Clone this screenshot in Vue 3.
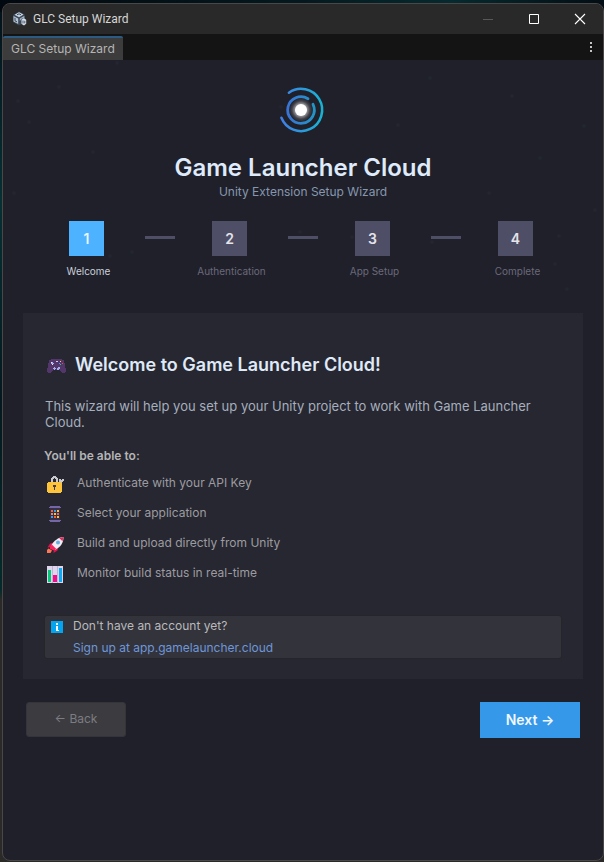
<script setup>
import { ref } from 'vue'

const current = ref(1)
const steps = ['Welcome', 'Authentication', 'App Setup', 'Complete']
const features = [
  { icon: 'lock', text: 'Authenticate with your API Key' },
  { icon: 'phone', text: 'Select your application' },
  { icon: 'rocket', text: 'Build and upload directly from Unity' },
  { icon: 'chart', text: 'Monitor build status in real-time' },
]
const stars = [
  [56, 27], [15, 41], [26, 62], [395, 65], [427, 18], [402, 112], [486, 133], [556, 176], [537, 98],
  [107, 196], [129, 192], [297, 172], [349, 177], [429, 182], [552, 204], [564, 229], [581, 66],
  [114, 3], [278, 47], [90, 92], [509, 36], [592, 150], [11, 133],
]
</script>

<template>
  <div class="desktop">
    <div class="window">
      <header class="titlebar">
        <svg class="app-icon" width="15" height="16" viewBox="0 0 15 16" aria-hidden="true">
          <path d="M7 0.5 12.5 3.5V11L7 14.5 1 11V4z" fill="#3b4757" />
          <path d="M7 1.2 11.5 3.6 7 6.2 2.5 3.8z" fill="#c6d3e2" />
          <path d="M1.5 5 6.2 7.6V13L1.5 10.4z" fill="#b4c3d4" />
          <path d="M12.4 4.8 7.8 7.5V10l2-2.4h2.6z" fill="#9fb0c4" />
          <path d="M3 6.8v3l2 1.1M5 3.8l2-1 2 1" stroke="#3b4757" fill="none" />
          <path d="M9.5 8.5 12 7.3l2.2 1.5v4L12 14.5l-2.5-1.4z" fill="#d5deea" />
          <path d="M11 9.5v3M12.8 9.8v2.6" stroke="#46566a" />
        </svg>
        <span class="window-title">GLC Setup Wizard</span>
        <div class="window-controls">
          <button type="button" disabled aria-label="Minimize">
            <svg width="12" height="12" viewBox="0 0 12 12"><path d="M1 6.5h10" stroke="#585858" /></svg>
          </button>
          <button type="button" aria-label="Maximize">
            <svg width="12" height="12" viewBox="0 0 12 12"><path d="M1.5 1.5h9v9h-9z" fill="none" stroke="#fff" /></svg>
          </button>
          <button type="button" aria-label="Close">
            <svg width="12" height="12" viewBox="0 0 12 12"><path d="M1 1l10 10M11 1 1 11" stroke="#fff" stroke-width="1.1" /></svg>
          </button>
        </div>
      </header>

      <nav class="tabs">
        <button type="button" class="tab">GLC Setup Wizard</button>
        <button type="button" class="tab-menu" aria-label="Tab menu">
          <svg width="4" height="12" viewBox="0 0 4 12" fill="#c4c4c4">
            <path d="M1 1h2v2H1zM1 5h2v2H1zM1 9h2v2H1z" />
          </svg>
        </button>
      </nav>

      <main class="content">
        <svg class="stars" width="600" height="420" viewBox="0 0 600 420" aria-hidden="true">
          <circle v-for="([x, y], i) in stars" :key="i" :cx="x" :cy="y" r="2" />
        </svg>

        <div class="brand">
          <svg class="logo" width="60" height="60" viewBox="0 0 60 60" aria-hidden="true">
            <defs>
              <linearGradient id="ring" x1="0" x2="1" y1="0" y2="0">
                <stop offset="0" stop-color="#3f7fe6" />
                <stop offset="1" stop-color="#19b2d2" />
              </linearGradient>
              <linearGradient id="inner" x1="0" x2="1" y1="0" y2="0">
                <stop offset="0" stop-color="#3a74d6" />
                <stop offset="1" stop-color="#2394c4" />
              </linearGradient>
              <radialGradient id="glow">
                <stop offset="0.45" stop-color="#fff" stop-opacity="0.6" />
                <stop offset="0.75" stop-color="#fff" stop-opacity="0.15" />
                <stop offset="1" stop-color="#fff" stop-opacity="0" />
              </radialGradient>
            </defs>
            <path d="M15.9 12.7A21.1 21.1 0 1 1 8.4 37.7" fill="none" stroke="url(#ring)" stroke-width="2.5" stroke-linecap="round" />
            <path d="M35 18.7A13.3 13.3 0 1 0 40 24.3" fill="none" stroke="url(#inner)" stroke-width="2.8" stroke-linecap="round" />
            <circle cx="28" cy="30" r="12" fill="url(#glow)" />
            <circle cx="28" cy="30" r="6" fill="#fff" />
          </svg>
          <h1>Game Launcher Cloud</h1>
          <p>Unity Extension Setup Wizard</p>
        </div>

        <ol class="steps">
          <template v-for="(label, i) in steps" :key="label">
            <li v-if="i > 0" class="connector" aria-hidden="true"></li>
            <li class="step" :class="{ active: current === i + 1 }">
              <span class="number">{{ i + 1 }}</span>
              <span class="label">{{ label }}</span>
            </li>
          </template>
        </ol>

        <section class="card">
          <h2>
            <svg width="20" height="18" viewBox="0 0 20 18" shape-rendering="crispEdges" aria-hidden="true">
              <path d="M4 1h11v1h2v3h1v5h1v4h-1v1h-3v-1h-1v-1h-1v-1H6v1H5v1H4v1H1v-1H0v-4h1V5h1V2h2z" fill="#54376a" />
              <path d="M5 4h1v1h1v1H6v1H5V6H4V5h1zM7 9h1v1h1v1H8v1H7v-1H6v-1h1zM11 9h2v2h-1v1h-2v-2h1z" fill="#a7aef0" />
              <path d="M4 4h1v1H4zM5 6h1v1H5z" fill="#e3e5ff" />
              <path d="M9 3h2v1H9z" fill="#d7c8e8" />
              <path d="M13 3h1v1h-1z" fill="#ffd23e" /><path d="M15 5h1v1h-1z" fill="#f24652" />
              <path d="M13 6h1v1h-1z" fill="#35c46b" /><path d="M12 5h1v1h-1z" fill="#3d9cff" />
            </svg>
            Welcome to Game Launcher Cloud!
          </h2>
          <p class="intro">This wizard will help you set up your Unity project to work with Game Launcher Cloud.</p>
          <h3>You'll be able to:</h3>
          <ul class="features">
            <li v-for="item in features" :key="item.icon">
              <svg width="18" height="18" viewBox="0 0 18 18" aria-hidden="true">
                <g v-if="item.icon === 'lock'" shape-rendering="crispEdges">
                  <path d="M12 4h2v1h1V4h2v2h-1v1h-1v7h-2V7h-1z" fill="#c9c9ce" />
                  <path d="M4 7V3h1V2h1V1h3v1h1v1h1v4H9V4H8V3H7v1H6v3z" fill="#c9c9ce" />
                  <path d="M1 7h13v1h1v9h-1v1H1v-1H0V8h1z" fill="#fdc33b" />
                  <path d="M6 10h3v2H8v3H7v-3H6z" fill="#473b4d" />
                </g>
                <g v-else-if="item.icon === 'phone'" shape-rendering="crispEdges">
                  <path d="M3 2h10v14H3z" fill="#373047" />
                  <path d="M3 1h10v1h1v1H2V2h1zM2 15h12v1h-1v1H3v-1H2z" fill="#7566a8" />
                  <path d="M4 5h2v2H4zM10 8h2v2h-2zM7 11h2v2H7z" fill="#f9603c" />
                  <path d="M7 5h2v2H7zM4 11h2v2H4z" fill="#2e9df4" />
                  <path d="M10 5h2v2h-2zM7 8h2v2H7zM10 11h2v2h-2z" fill="#ffc140" />
                  <path d="M4 8h2v2H4z" fill="#ff8055" />
                </g>
                <g v-else-if="item.icon === 'rocket'">
                  <path d="M7 7.5 3 8.5 0.5 12.5 5 12zM11.5 12 10.5 15.5 6.5 18 7 14z" fill="#d8174c" />
                  <path d="M16.5 2C11 2.5 7 5.5 4 11L8 15C13.5 12 16.5 8 16.5 2z" fill="#f1ebf3" />
                  <path d="M16.5 2 12.2 3 15.5 6.3z" fill="#ee2458" />
                  <circle cx="11" cy="7.5" r="2" fill="#6aaede" />
                  <path d="M4.8 9.5 9.3 14 7 15.5 3 14 3 12z" fill="#f4265d" />
                  <path d="M1.5 13.5 5 15.5 3.5 18H0V15z" fill="#ff7657" />
                </g>
                <g v-else shape-rendering="crispEdges">
                  <path d="M0 1h16v17H0z" fill="#dfd5ed" />
                  <path d="M5 1h1v17H5zM10 1h1v17h-1z" fill="#bfb4d6" />
                  <path d="M1 5h3v12H1z" fill="#05c777" />
                  <path d="M6 10h4v7H6z" fill="#f60b86" />
                  <path d="M12 3h3v14h-3z" fill="#10a9f3" />
                </g>
              </svg>
              {{ item.text }}
            </li>
          </ul>
          <aside class="notice">
            <svg width="12" height="12" viewBox="0 0 12 12" shape-rendering="crispEdges" aria-hidden="true">
              <path d="M0 0h12v12H0z" fill="#04a5f0" />
              <path d="M5 2h2v2H5zM5 5h2v4h1v1H5z" fill="#fff" />
            </svg>
            <div class="notice-text">
              <p>Don't have an account yet?</p>
              <a href="#signup">Sign up at app.gamelauncher.cloud</a>
            </div>
          </aside>
        </section>

        <footer class="actions">
          <button type="button" class="back" disabled>← Back</button>
          <button type="button" class="next">Next →</button>
        </footer>
      </main>
    </div>
  </div>
</template>

<style>
body {
  margin: 0;
  background: #2b2a29;
}
</style>

<style scoped>
.desktop {
  box-sizing: border-box;
  min-height: 100vh;
  padding: 3px 0 1px 2px;
  display: flex;
  background:
    linear-gradient(90deg, #02080f, #04191f 50%, #052a2f 75%, #030d14) top / 100% 12px no-repeat,
    linear-gradient(#03111a, #063034 200px, #04191f 400px, #052a2b 590px, #2b2a29 600px);
  font-family: Inter, "Liberation Sans", sans-serif;
  font-size: 12px;
}
h1, h2, h3, p, ol, ul {
  margin: 0;
  padding: 0;
}
li {
  list-style: none;
}
button {
  font: inherit;
  border: 0;
  padding: 0;
  background: none;
}
svg {
  flex: none;
  display: block;
}
.window {
  flex: 1;
  display: flex;
  flex-direction: column;
  overflow: hidden;
  border: 1px solid #494846;
  border-radius: 8px;
  background: #20202a;
}
.titlebar {
  display: flex;
  align-items: center;
  height: 30px;
  padding-left: 9px;
  background: #292929;
}
.window-title {
  margin-left: 6px;
  font-family: Roboto, "Noto Sans", sans-serif;
  color: #d6d6d6;
}
.window-controls {
  margin-left: auto;
  display: flex;
  height: 100%;
}
.window-controls button {
  width: 46px;
  display: grid;
  place-items: center;
}
.tabs {
  display: flex;
  justify-content: space-between;
  height: 26px;
  background: #141414;
}
.tab {
  align-self: flex-end;
  height: 24px;
  padding: 0 8px 2px;
  border-top: 2px solid #2b5a83;
  border-radius: 2px 2px 0 0;
  background: #3c3c3c;
  color: #b5b5b5;
}
.tab-menu {
  width: 24px;
  display: grid;
  place-items: center;
}
.content {
  position: relative;
  flex: 1;
  padding: 20px;
}
.stars {
  position: absolute;
  top: 0;
  left: 0;
  fill: #23252f;
}
.brand,
.steps,
.card,
.actions {
  position: relative;
}
.brand {
  display: flex;
  flex-direction: column;
  align-items: center;
}
.brand h1 {
  margin-top: 13px;
  font-size: 24px;
  line-height: 30px;
  font-weight: 600;
  color: #dfeafa;
}
.brand p {
  line-height: 18px;
  color: #8597ae;
}
.steps {
  margin-top: 20px;
  display: flex;
  justify-content: center;
  gap: 15px;
}
.step {
  width: 83px;
  display: flex;
  flex-direction: column;
  align-items: center;
}
.number {
  width: 35px;
  margin-right: 4px;
  line-height: 35px;
  text-align: center;
  font-size: 14px;
  font-weight: 600;
  background: #4e4e66;
  color: #e4e4ea;
}
.label {
  margin-top: 8px;
  font-size: 10px;
  line-height: 14px;
  color: #6a697b;
}
.step.active .number {
  background: #4db2ff;
  color: #e8f4ff;
}
.step.active .label {
  color: #c9cfd9;
}
.connector {
  width: 30px;
  height: 3px;
  margin-top: 15px;
  background: #4e4e66;
}
.card {
  margin-top: 35px;
  padding: 40px 21px 20px;
  background: #272731;
}
.card h2 {
  display: flex;
  align-items: center;
  gap: 8px;
  padding-left: 3px;
  font-size: 18px;
  line-height: 24px;
  font-weight: 600;
  color: #dfe9f7;
}
.card h2 svg {
  margin-top: 3px;
}
.intro {
  margin: 21px 0 16px 1px;
  font-size: 13px;
  line-height: 16px;
  color: #a6afbd;
}
.card h3 {
  font-size: 12px;
  line-height: 20px;
  font-weight: 600;
  color: #b4b4b6;
}
.features {
  margin-top: 1px;
}
.features li {
  display: flex;
  align-items: center;
  gap: 12px;
  height: 30px;
  padding-left: 3px;
  color: #9c9ca0;
}
.features svg {
  margin-top: 4px;
}
.notice {
  margin-top: 28px;
  display: flex;
  gap: 10px;
  padding: 0 6px;
  border: 1px solid #25252a;
  border-radius: 3px;
  background: #33333b;
  line-height: 20px;
  color: #b9b9bb;
}
.notice svg {
  margin-top: 5px;
}
.notice-text {
  display: flex;
  flex-direction: column;
  gap: 2px;
}
.notice a {
  color: #6e97d9;
  text-decoration: none;
}
.actions {
  display: flex;
  justify-content: space-between;
  align-items: flex-start;
  padding: 23px 3px 0;
}
.actions button {
  width: 100px;
  height: 36px;
  padding-bottom: 2px;
}
.actions .back {
  height: 35px;
  border: 1px solid #34343a;
  border-radius: 3px;
  background: #3c3b40;
  color: #7d7d81;
}
.actions .next {
  background: #3598e8;
  color: #f0f7ff;
  font-size: 14px;
  font-weight: 600;
}
</style>
